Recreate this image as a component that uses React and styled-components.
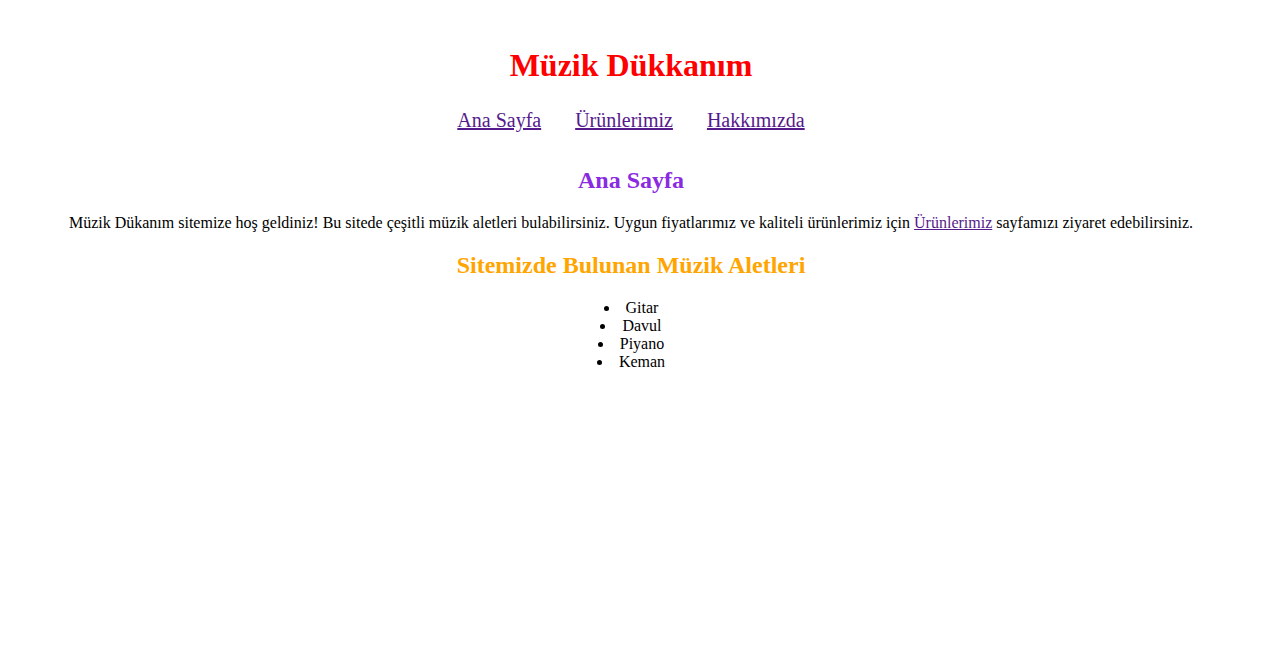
import React from 'react';
import styled, { createGlobalStyle } from 'styled-components';

const GlobalStyle = createGlobalStyle`
  body {
    margin: 8px 14px 8px 8px;
    background: #ffffff;
    color: #000000;
    font-family: "Liberation Serif", "Times New Roman", serif;
    font-size: 16px;
  }
`;

const Header = styled.header`
  padding: 17.5px 0 15px;
  text-align: center;
`;

const Title = styled.h1`
  color: #ff0000;
  font-size: 32px;
  font-weight: bold;
  margin: 21.44px 0 25px;
`;

const Nav = styled.nav`
  display: block;
`;

const NavLink = styled.a`
  color: #551a8b;
  font-size: 20px;
  margin: 0 15px;
  text-decoration: underline;
`;

const Main = styled.main`
  text-align: center;
`;

const SectionTitle = styled.h2`
  color: ${props => props.tone};
  font-size: 24px;
  font-weight: bold;
  margin: 19.92px 0;
`;

const Paragraph = styled.p`
  margin: 16px 0;
`;

const InlineLink = styled.a`
  color: #551a8b;
  text-decoration: underline;
`;

const List = styled.ul`
  list-style: disc inside;
  margin: 16px 0;
  padding: 0;
`;

const Item = styled.li``;

const instruments = ['Gitar', 'Davul', 'Piyano', 'Keman'];

const App = () => {
  return (
    <>
      <GlobalStyle />
      <Header>
        <Title>Müzik Dükkanım</Title>
        <Nav>
          <NavLink href="#">Ana Sayfa</NavLink>
          {' '}
          <NavLink href="#">Ürünlerimiz</NavLink>
          {' '}
          <NavLink href="#">Hakkımızda</NavLink>
        </Nav>
      </Header>
      <Main>
        <SectionTitle tone="#8a2be2">Ana Sayfa</SectionTitle>
        <Paragraph>
          Müzik Dükanım sitemize hoş geldiniz! Bu sitede çeşitli müzik aletleri bulabilirsiniz. Uygun fiyatlarımız ve kaliteli ürünlerimiz için <InlineLink href="#">Ürünlerimiz</InlineLink> sayfamızı ziyaret edebilirsiniz.
        </Paragraph>
        <SectionTitle tone="#ffa500">Sitemizde Bulunan Müzik Aletleri</SectionTitle>
        <List>
          {instruments.map(name => (
            <Item key={name}>{name}</Item>
          ))}
        </List>
      </Main>
    </>
  );
};

export default App;
